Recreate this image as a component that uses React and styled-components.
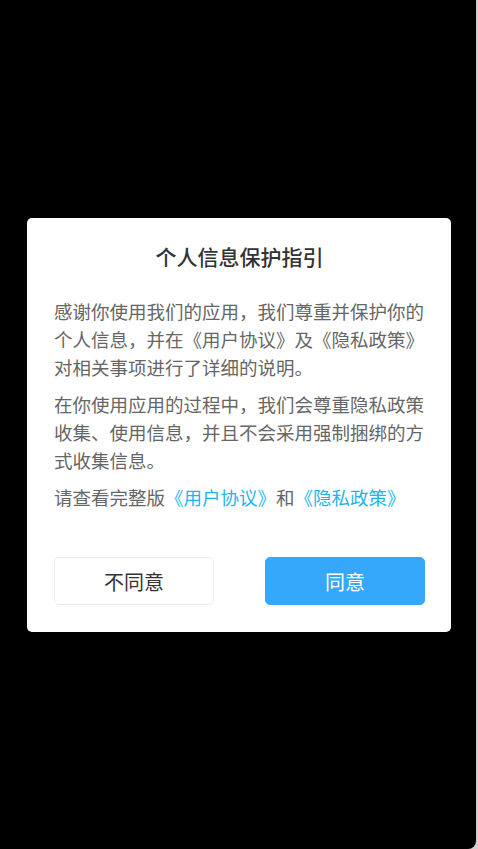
import React from 'react';
import styled, {createGlobalStyle} from 'styled-components';

const GlobalStyle = createGlobalStyle`
  html, body {
    margin: 0;
    padding: 0;
    height: 100%;
    background: #cfcfcf;
  }
  #root {
    height: 100%;
  }
  * {
    box-sizing: border-box;
  }
`

const Screen = styled.div`
  display: flex;
  height: 849px;
  font-family: "Noto Sans CJK SC", "Noto Sans", sans-serif;
`

const Mask = styled.div`
  flex: 1;
  background: #000;
  border-bottom-right-radius: 8px;
  display: flex;
  align-items: flex-start;
  justify-content: center;
  padding: 218px 25px 0 27px;
`

const Edge = styled.div`
  width: 2px;
  background: #cfcfcf;
`

const Dialog = styled.div`
  width: 424px;
  background: #fff;
  border-radius: 5px;
  padding: 22px 26px 27px 27px;
`

const Title = styled.h2`
  margin: 0 0 25px;
  text-align: center;
  font-size: 21px;
  font-weight: 500;
  line-height: 32px;
  color: #333;
`

const Para = styled.p`
  margin: 0 0 9px;
  font-size: 18.5px;
  line-height: 28px;
  color: #666;
`

const Link = styled.span`
  color: #1ab6f0;
`

const Actions = styled.div`
  display: flex;
  justify-content: space-between;
  margin-top: 46px;
`

const Button = styled.button`
  width: 160px;
  height: 48px;
  border-radius: 5px;
  font-family: inherit;
  font-size: 20px;
  border: 1px solid ${p => p.primary ? '#36a8fb' : '#ededed'};
  background: ${p => p.primary ? '#36a8fb' : '#fff'};
  color: ${p => p.primary ? '#fff' : '#333'};
  padding: 0;
`

export default function App() {
    return (
        <>
            <GlobalStyle/>
            <Screen>
                <Mask>
                    <Dialog>
                        <Title>个人信息保护指引</Title>
                        <Para>感谢你使用我们的应用，我们尊重并保护你的个人信息，并在《用户协议》及《隐私政策》对相关事项进行了详细的说明。</Para>
                        <Para>在你使用应用的过程中，我们会尊重隐私政策收集、使用信息，并且不会采用强制捆绑的方式收集信息。</Para>
                        <Para>请查看完整版<Link>《用户协议》</Link>和<Link>《隐私政策》</Link></Para>
                        <Actions>
                            <Button>不同意</Button>
                            <Button primary>同意</Button>
                        </Actions>
                    </Dialog>
                </Mask>
                <Edge/>
            </Screen>
        </>
    );
}
